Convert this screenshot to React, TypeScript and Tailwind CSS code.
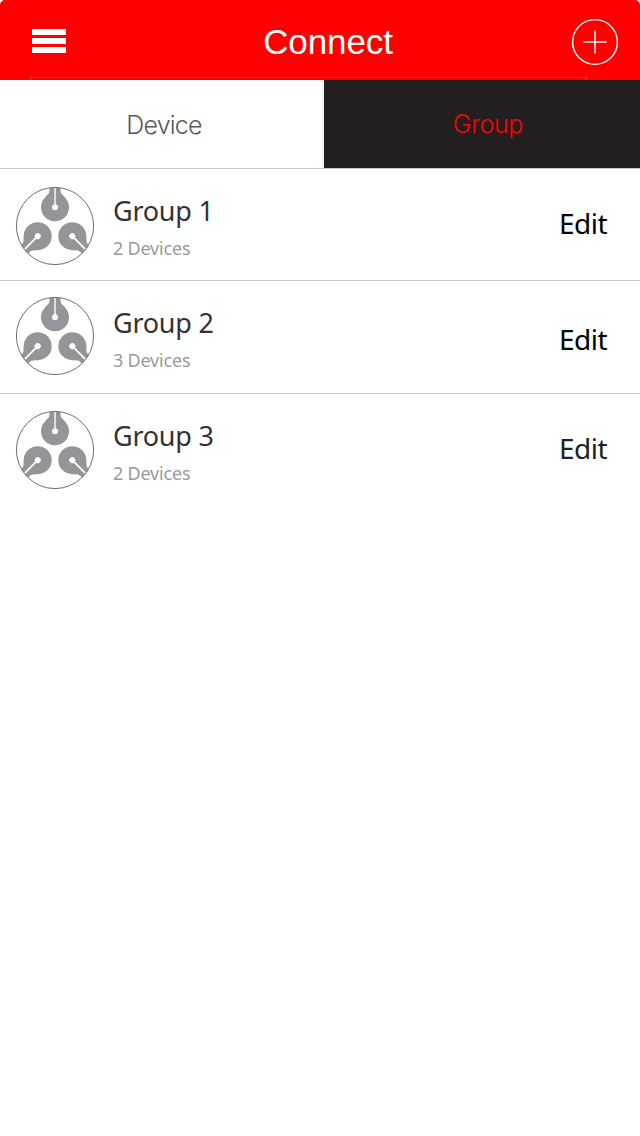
const groups = [
  { name: "Group 1", devices: "2 Devices", row: "h-28", icon: "mt-[17px]", text: "mt-6", edit: "mt-[34px]", editColor: "text-black" },
  { name: "Group 2", devices: "3 Devices", row: "h-[113px]", icon: "mt-[15px]", text: "mt-6", edit: "mt-[38px]", editColor: "text-black" },
  { name: "Group 3", devices: "2 Devices", row: "h-28", icon: "mt-4", text: "mt-6", edit: "mt-[34px]", editColor: "text-[#231f20]" },
];

function MenuIcon() {
  return (
    <div className="mb-0.5 ml-[31px] flex w-[35px] flex-col gap-[3px] pl-[0.5px]">
      <span className="h-1.5 bg-white" />
      <span className="h-1.5 bg-white" />
      <span className="h-1.5 bg-white" />
    </div>
  );
}

function AddIcon() {
  return (
    <svg className="mr-[21px] h-12 w-12" viewBox="0 0 48 48" fill="none" stroke="white">
      <circle cx="24" cy="24" r="22.4" strokeWidth="1.4" />
      <path d="M24 12.5v23M12.5 24h23" strokeWidth="1.5" />
    </svg>
  );
}

// one plug, pointing up, with its head centred on the origin
function Plug({ transform, slot = "#ffffff" }: { transform: string; slot?: string }) {
  return (
    <g transform={transform}>
      <circle r="14" fill="#939598" />
      <path d="M-5.5 -26V-16.5C-5.5 -14 -7.2 -12.8 -10 -9.8L0 0L10 -9.8C7.2 -12.8 5.5 -14 5.5 -16.5V-26Z" fill="#939598" />
      <path d="M0 0V-26" stroke={slot} strokeWidth="1.8" />
      <circle r="3" fill="#ffffff" />
    </g>
  );
}

function GroupIcon({ id }: { id: string }) {
  return (
    <svg className="h-20 w-20" viewBox="0 0 80 80">
      <clipPath id={id}>
        <circle cx="40" cy="40" r="38.6" />
      </clipPath>
      <g clipPath={`url(#${id})`}>
        <Plug transform="translate(40 21.3)" slot="#e6e7e8" />
        <Plug transform="translate(22.7 50.2) rotate(225)" />
        <Plug transform="translate(57.3 50.2) rotate(135)" />
      </g>
      <circle cx="40" cy="40" r="38.6" fill="none" stroke="#6d6e71" strokeWidth="1" />
    </svg>
  );
}

export default function App() {
  return (
    <div className="h-[1136px] w-[640px] overflow-hidden bg-white font-['Noto_Sans',sans-serif]">
      <header className="relative flex h-20 items-center justify-between rounded-t-[5px] bg-[#ff0000] pt-1">
        <MenuIcon />
        <h1 className="pl-[19px] font-['Liberation_Sans',sans-serif] text-[35px] leading-10 tracking-[-0.1px] text-white">
          Connect
        </h1>
        <AddIcon />
        <span className="absolute bottom-0 left-[30px] h-[3px] w-[557px] border border-b-0 border-[#ff3030]" />
      </header>

      <nav className="flex h-[89px] border-b border-[#c7c7cc] font-['Inter',sans-serif] text-[25px] font-light">
        <button className="w-[324px] border-r-2 border-[#f1f1f2] pl-1.5 pt-1 tracking-[-0.8px] text-[#58595b]">
          Device
        </button>
        <button className="flex-1 bg-[#231f20] pl-3 pt-0.5 tracking-[-0.3px] text-[#ff0000]">
          Group
        </button>
      </nav>

      <ul>
        {groups.map((group, i) => (
          <li
            key={group.name}
            className={`flex border-[#c7c7cc] pl-[15px] pr-[33px] ${group.row} ${i < groups.length - 1 ? "border-b" : ""}`}
          >
            <div className={group.icon}>
              <GroupIcon id={`ring-${i}`} />
            </div>
            <div className={`ml-[18px] flex-1 ${group.text}`}>
              <h2 className="text-[27px] leading-9 tracking-[-0.25px] text-[#333333]">{group.name}</h2>
              <p className="mt-[5px] text-[18px] leading-7 tracking-[-0.2px] text-[#999999]">{group.devices}</p>
            </div>
            <div className={group.edit}>
              <button className={`text-[28px] leading-10 tracking-[-0.5px] ${group.editColor}`}>Edit</button>
            </div>
          </li>
        ))}
      </ul>
    </div>
  );
}
